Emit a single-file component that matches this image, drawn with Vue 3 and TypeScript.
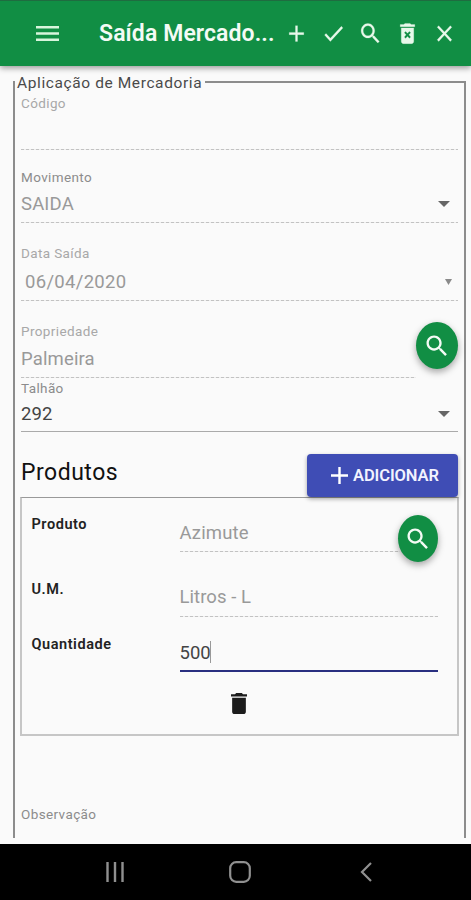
<script setup lang="ts">
import { ref } from 'vue'

const icons = {
  add: 'M19 13h-6v6h-2v-6H5v-2h6V5h2v6h6v2z',
  check: 'M9 16.17L4.83 12l-1.42 1.41L9 19 21 7l-1.41-1.41z',
  search:
    'M15.5 14h-.79l-.28-.27C15.41 12.59 16 11.11 16 9.5 16 5.91 13.09 3 9.5 3S3 5.91 3 9.5 5.91 16 9.5 16c1.61 0 3.09-.59 4.23-1.57l.27.28v.79l5 4.99L20.49 19l-4.99-5zm-6 0C7.01 14 5 11.99 5 9.5S7.01 5 9.5 5 14 7.01 14 9.5 11.99 14 9.5 14z',
  close:
    'M19 6.41L17.59 5 12 10.59 6.41 5 5 6.41 10.59 12 5 17.59 6.41 19 12 13.41 17.59 19 19 17.59 13.41 12z',
  trash: 'M6 19c0 1.1.9 2 2 2h8c1.1 0 2-.9 2-2V7H6v12zM19 4h-3.5l-1-1h-5l-1 1H5v2h14V4z',
  clear:
    'M6 19c0 1.1.9 2 2 2h8c1.1 0 2-.9 2-2V7H6v12zm2.8-7.6l1.4-1.4 1.8 1.8 1.8-1.8 1.4 1.4-1.8 1.8 1.8 1.8-1.4 1.4-1.8-1.8-1.8 1.8-1.4-1.4 1.8-1.8-1.8-1.8zM19 4h-3.5l-1-1h-5l-1 1H5v2h14V4z',
  menu: 'M3 18h18v-2H3v2zm0-5h18v-2H3v2zm0-7v2h18V6H3z',
}

const actions: { name: string; path: string }[] = [
  { name: 'add', path: icons.add },
  { name: 'check', path: icons.check },
  { name: 'search', path: icons.search },
  { name: 'clear', path: icons.clear },
  { name: 'close', path: icons.close },
]

const movimento = ref('SAIDA')
const data = ref('06/04/2020')
const propriedade = ref('Palmeira')
const talhao = ref('292')
const produto = ref('Azimute')
const unidade = ref('Litros - L')
const quantidade = ref('500')
</script>

<template>
  <div class="screen">
    <header class="toolbar">
      <svg class="menu" viewBox="3 6 18 12" preserveAspectRatio="none"><path :d="icons.menu" /></svg>
      <h1 class="title">Saída Mercado...</h1>
      <nav class="actions">
        <svg v-for="a in actions" :key="a.name" class="action" viewBox="0 0 24 24" preserveAspectRatio="none">
          <path :d="a.path" />
        </svg>
      </nav>
    </header>

    <main class="content">
      <fieldset class="frame">
        <legend class="legend">Aplicação de Mercadoria</legend>

        <div class="field codigo">
          <span class="label">Código</span>
        </div>

        <div class="field movimento">
          <span class="label dark">Movimento</span>
          <div class="line">
            <span class="value">{{ movimento }}</span>
            <svg class="arrow" viewBox="0 0 12 6" preserveAspectRatio="none"><path d="M0 0h12L6 6z" /></svg>
          </div>
        </div>

        <div class="field data">
          <span class="label">Data Saída</span>
          <div class="line">
            <span class="value date">{{ data }}</span>
            <svg class="arrow small" viewBox="0 0 12 6" preserveAspectRatio="none"><path d="M0 0h12L6 6z" /></svg>
          </div>
        </div>

        <div class="with-fab">
          <div class="field propriedade">
            <span class="label">Propriedade</span>
            <div class="line"><span class="value">{{ propriedade }}</span></div>
          </div>
          <button class="fab">
            <svg viewBox="0 0 24 24" preserveAspectRatio="none"><path :d="icons.search" /></svg>
          </button>
        </div>

        <div class="field solid talhao">
          <span class="label dark">Talhão</span>
          <div class="line">
            <span class="value active">{{ talhao }}</span>
            <svg class="arrow" viewBox="0 0 12 6" preserveAspectRatio="none"><path d="M0 0h12L6 6z" /></svg>
          </div>
        </div>

        <div class="section">
          <h2 class="heading">Produtos</h2>
          <button class="add">
            <svg viewBox="5 5 14 14"><path :d="icons.add" /></svg>
            <span>ADICIONAR</span>
          </button>
        </div>

        <section class="box">
          <div class="row first">
            <span class="name">Produto</span>
            <div class="field cell"><span class="value">{{ produto }}</span></div>
            <button class="fab narrow">
              <svg viewBox="0 0 24 24" preserveAspectRatio="none"><path :d="icons.search" /></svg>
            </button>
          </div>
          <div class="row second">
            <span class="name">U.M.</span>
            <div class="field cell"><span class="value unit">{{ unidade }}</span></div>
          </div>
          <div class="row third">
            <span class="name">Quantidade</span>
            <div class="field cell focused">
              <span class="value active qty">{{ quantidade }}</span><i class="caret"></i>
            </div>
          </div>
          <svg class="trash" viewBox="5 3 14 18" preserveAspectRatio="none"><path :d="icons.trash" /></svg>
        </section>

        <span class="label dark obs">Observação</span>
      </fieldset>
    </main>

    <footer class="navbar">
      <svg class="recents" viewBox="0 0 18 20"><path d="M1.5 0v20M9 0v20M16.5 0v20" /></svg>
      <svg class="home" viewBox="0 0 22 22"><rect x="1.2" y="1.2" width="19.6" height="19.6" rx="6" /></svg>
      <svg class="back" viewBox="0 0 12 20"><path d="M11 1L2 10l9 9" /></svg>
    </footer>
  </div>
</template>

<style>
body {
  margin: 0;
  background: #fafafa;
}
</style>

<style scoped>
* {
  box-sizing: border-box;
}
.screen {
  width: 471px;
  height: 900px;
  display: flex;
  flex-direction: column;
  overflow: hidden;
  background: #fafafa;
  font-family: Roboto, 'Liberation Sans', sans-serif;
}
svg {
  display: block;
  flex: none;
}
button {
  border: 0;
  padding: 0;
  font: inherit;
}
.toolbar {
  position: relative;
  flex: none;
  display: flex;
  align-items: center;
  height: 66px;
  padding: 0 12px 1px 36px;
  background: #118e44;
  border-top: 1px solid #1f6c40;
  box-shadow: 0 2px 6px rgba(0, 0, 0, 0.4);
  color: #f4fbf5;
}
.menu {
  width: 23px;
  height: 15px;
  fill: #d8f5dc;
}
.title {
  flex: none;
  width: 182px;
  margin: 2px 0 0 40px;
  font-size: 23px;
  font-weight: 600;
  line-height: 30px;
  letter-spacing: 0.1px;
  white-space: nowrap;
}
.actions {
  display: flex;
  gap: 12.2px;
  margin-left: 2.5px;
}
.action {
  width: 25px;
  height: 27px;
  fill: #e8f8ea;
  stroke: #e8f8ea;
  stroke-width: 0.2;
}
.content {
  flex: none;
  height: 778px;
  padding: 7px 5px 0 13px;
}
.frame {
  height: 765px;
  min-width: 0;
  margin: 0;
  padding: 0 6px;
  border: 2px solid #8c8c8c;
  border-bottom: 0;
}
.legend {
  height: 18px;
  margin-left: -6px;
  padding: 0 3px 0 2px;
  font-size: 15.5px;
  line-height: 20px;
  letter-spacing: 0.6px;
  color: #4a4a4a;
}
.field {
  display: flex;
  flex-direction: column;
  background: repeating-linear-gradient(90deg, #c2c2c2 0 3px, #eee 3px 5px) bottom / 100% 1.5px no-repeat;
}
.label {
  display: block;
  font-size: 13.5px;
  line-height: 16px;
  letter-spacing: 0.38px;
  color: #a8a8a8;
}
.label.dark {
  color: #8c8c8c;
}
.line {
  display: flex;
  align-items: center;
  justify-content: space-between;
}
.value {
  font-size: 18.5px;
  line-height: 24px;
  letter-spacing: 0.15px;
  color: #999;
  white-space: nowrap;
}
.value.date {
  letter-spacing: 0.3px;
}
.value.unit {
  letter-spacing: 0.05px;
}
.value.active {
  color: #444;
}
.value.qty {
  letter-spacing: 0;
}
.arrow {
  width: 12px;
  height: 6px;
  margin-right: 8px;
  fill: #666;
}
.arrow.small {
  width: 7px;
  height: 6px;
  margin-right: 6px;
  fill: #8a8a8a;
}
.codigo {
  height: 59px;
  padding-top: 4px;
}
.movimento {
  height: 73px;
  padding-top: 19px;
}
.movimento .line {
  margin-top: 7px;
}
.data {
  height: 78px;
  padding-top: 22px;
}
.data .line {
  margin-top: 9px;
  padding-left: 4px;
}
.with-fab {
  display: flex;
  height: 77px;
}
.propriedade {
  flex: 1;
  padding-top: 22px;
}
.propriedade .line {
  margin-top: 8px;
}
.fab {
  flex: none;
  display: flex;
  align-items: center;
  justify-content: center;
  width: 42px;
  height: 47px;
  margin-top: 21px;
  border-radius: 50%;
  background: #118e44;
  box-shadow: 0 3px 7px rgba(0, 0, 0, 0.35);
}
.fab svg {
  width: 28px;
  height: 28px;
  fill: #f4fbf5;
}
.fab.narrow {
  width: 40px;
  margin: 17px 0 0 -2px;
}
.talhao {
  height: 54px;
  padding-top: 2px;
}
.talhao .line {
  margin-top: 6px;
}
.field.solid {
  background: linear-gradient(#aaa, #aaa) bottom / 100% 1.5px no-repeat;
}
.section {
  position: relative;
  display: flex;
  align-items: flex-start;
  justify-content: space-between;
  height: 65px;
  padding-top: 22px;
}
.heading {
  margin: 4px 0 0;
  font-size: 23px;
  font-weight: 400;
  line-height: 30px;
  letter-spacing: 0.5px;
  color: #111;
}
.add {
  display: flex;
  align-items: center;
  width: 151.5px;
  height: 43px;
  padding-left: 24.5px;
  gap: 5px;
  border-radius: 4px;
  background: #3f4db5;
  box-shadow: 0 2px 4px rgba(0, 0, 0, 0.35);
  color: #f2f3ff;
  font-size: 16.5px;
  font-weight: 600;
  letter-spacing: -0.1px;
  white-space: nowrap;
}
.add svg {
  width: 17px;
  height: 17px;
  fill: #fff;
}
.box {
  height: 239px;
  margin: 0 -1px;
  padding: 0 19px 0 9.5px;
  border: 2px solid #c6c6c6;
  border-top: 1px solid #999;
}
.row {
  display: flex;
}
.name {
  flex: none;
  width: 148px;
  font-size: 14.5px;
  font-weight: 600;
  line-height: 18px;
  letter-spacing: 0.55px;
  color: #222;
}
.cell {
  flex: 1;
}
.first {
  height: 64px;
}
.first .name {
  margin-top: 18px;
}
.first .cell {
  height: 54px;
  padding-top: 23px;
}
.second {
  height: 55px;
}
.second .name {
  margin-top: 19px;
}
.second .cell {
  padding-top: 23px;
}
.third {
  height: 55px;
}
.third .name {
  margin-top: 19px;
}
.third .cell {
  flex-direction: row;
  padding-top: 24px;
}
.field.focused {
  background: linear-gradient(#292f80, #292f80) bottom / 100% 2px no-repeat;
}
.caret {
  width: 1px;
  height: 22px;
  margin-left: -1px;
  background: #999;
}
.trash {
  width: 16px;
  height: 21px;
  margin: 21px 0 0 199.5px;
  fill: #1c1c1c;
}
.obs {
  margin-top: 70px;
}
.navbar {
  flex: none;
  display: flex;
  align-items: center;
  height: 56px;
  padding-left: 106px;
  background: #000;
  fill: none;
  stroke: #909090;
}
.recents {
  width: 18px;
  height: 20px;
  stroke-width: 2.4;
}
.home {
  width: 22px;
  height: 22px;
  margin-left: 105px;
  stroke-width: 2.2;
}
.back {
  width: 12px;
  height: 20px;
  margin-left: 109px;
  stroke-width: 2.2;
}
</style>
